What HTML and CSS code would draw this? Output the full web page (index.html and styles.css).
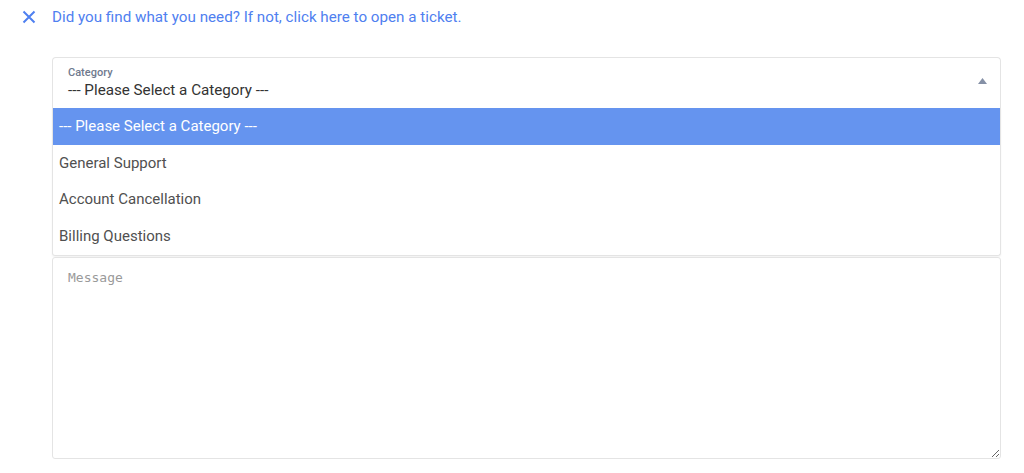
FILE: index.html
```html
<!DOCTYPE html>
<html>
<head>
<meta charset="utf-8">
<link rel="stylesheet" href="styles.css">
</head>
<body>
<div class="notice">
  <svg class="close" width="14" height="14" viewBox="0 0 14 14"><path d="M1.5 1.5 L12.5 12.5 M12.5 1.5 L1.5 12.5" stroke="#4f80f0" stroke-width="2" fill="none"/></svg>
  <span class="notice-text">Did you find what you need? If not, click here to open a ticket.</span>
</div>
<div class="form">
  <div class="select">
    <div class="select-main">
      <div class="label">Category</div>
      <div class="value">--- Please Select a Category ---</div>
    </div>
    <svg class="caret" width="9" height="6" viewBox="0 0 9 6"><path d="M0 6 L4.5 0 L9 6 Z" fill="#8590a6"/></svg>
  </div>
  <ul class="options">
    <li class="option selected">--- Please Select a Category ---</li>
    <li class="option">General Support</li>
    <li class="option">Account Cancellation</li>
    <li class="option">Billing Questions</li>
  </ul>
  <textarea class="message" placeholder="Message"></textarea>
</div>
</body>
</html>
```
FILE: styles.css
```css
html, body {
  margin: 0;
  padding: 0;
  background: #fff;
  font-family: Roboto, "Liberation Sans", sans-serif;
}
.notice {
  display: flex;
  align-items: center;
  padding: 8px 0 0 22px;
  height: 18px;
}
.close {
  flex: none;
  margin-right: 16px;
}
.notice-text {
  color: #4f80f0;
  font-size: 15.2px;
}
.form {
  margin: 31px 0 0 52px;
  width: 949px;
}
.select {
  box-sizing: border-box;
  height: 51px;
  border: 1px solid #e4e4e4;
  border-bottom: none;
  border-radius: 4px 4px 0 0;
  display: flex;
  align-items: center;
  padding: 0 13px 0 15px;
}
.select-main {
  flex: 1;
  padding-top: 4px;
}
.label {
  font-size: 11px;
  font-weight: 500;
  color: #6f7a8e;
  line-height: 12px;
  margin-top: -3px;
}
.value {
  font-size: 15.2px;
  color: #333;
  line-height: 20px;
  margin-top: 1px;
}
.caret {
  margin-bottom: 4px;
}
.options {
  list-style: none;
  margin: 0;
  padding: 0;
  border: 1px solid #e4e4e4;
  border-top: none;
  border-radius: 0 0 3px 3px;
  box-shadow: 0 1px 2px rgba(0,0,0,0.06);
}
.option {
  height: 36.7px;
  line-height: 36px;
  padding-left: 6px;
  font-size: 15px;
  color: #505050;
}
.option.selected {
  background: #6594ef;
  color: #fff;
}
.message {
  display: block;
  box-sizing: border-box;
  width: 949px;
  height: 202px;
  margin-top: 1px;
  border: 1px solid #e4e4e4;
  border-radius: 3px;
  padding: 12px 15px;
  font-family: "DejaVu Sans Mono", monospace;
  font-size: 13px;
  resize: vertical;
  outline: none;
}
.message::placeholder {
  color: #9a9a9a;
}
```
